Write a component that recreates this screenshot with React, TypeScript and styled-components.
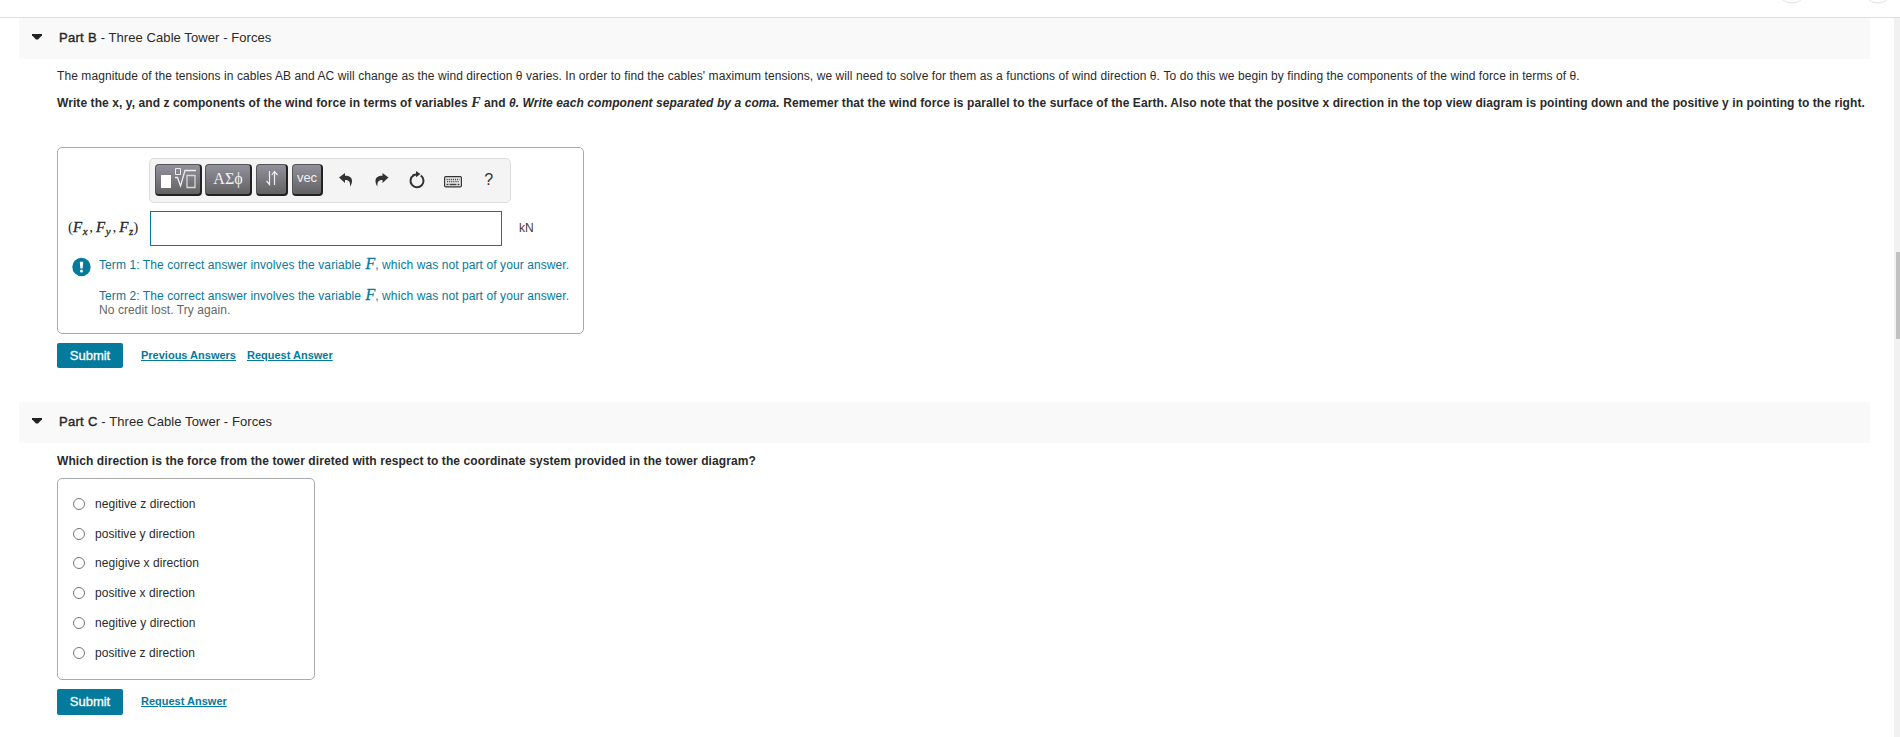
import { useState } from "react";
import styled, { createGlobalStyle } from "styled-components";

const choices = [
  "negitive z direction",
  "positive y direction",
  "negigive x direction",
  "positive x direction",
  "negitive y direction",
  "positive z direction",
];

const PartHeading = ({ part }: { part: string }) => (
  <PartHeader>
    <Caret viewBox="0 0 10 6">
      <path d="M0 0h10v1.2L6 5.6H4L0 1.2z" fill="#222" />
    </Caret>
    <PartTitle>
      <PartName>Part {part}</PartName> - Three Cable Tower - Forces
    </PartTitle>
  </PartHeader>
);

const Term = ({ n }: { n: number }) => (
  <TermLine>
    Term {n}: The correct answer involves the variable <MathVar>F</MathVar>,
    which was not part of your answer.
  </TermLine>
);

const Toolbar = () => (
  <ToolbarWrapper>
    <ToolButton $width={47} $gap={3}>
      <svg width="36" height="22" viewBox="0 0 36 22">
        <path d="M1 8h10v13H1z" fill="#fff" />
        <g fill="none" stroke="#eee">
          <path d="M15.5 1.5h5v6h-5z" />
          <path d="M15 10.5h2.5l3 8.5 4.5-15.5h11" strokeWidth="1.3" />
          <path d="M27 8.5h8v12h-8z" stroke="#d8d8d8" strokeWidth="1.3" />
        </g>
      </svg>
    </ToolButton>
    <ToolButton $width={47} $serif>
      ΑΣϕ
    </ToolButton>
    <ToolButton $width={32}>
      <svg width="14" height="16" viewBox="0 0 14 16">
        <path
          d="M4.5 1v13M1.5 11l3 3.5v-3.5M9.5 15V2M6.8 5l2.7-3.5L12.5 5"
          fill="none"
          stroke="#eee"
          strokeWidth="1.2"
        />
      </svg>
    </ToolButton>
    <ToolButton $width={31} $gap={5}>
      vec
    </ToolButton>
    <IconButton>
      <svg width="14" height="16" viewBox="0 0 14 16">
        <path
          d="M0 5.5 6 1v2.7c4.7 0 7 2 7 5 0 2.3-.7 4-2 6.1.5-4.3-.5-6.8-5-6.8v3z"
          fill="#333"
        />
      </svg>
    </IconButton>
    <IconButton>
      <svg width="14" height="16" viewBox="0 0 14 16">
        <path
          d="M13.5 5.5 7.5 1v2.7c-4.7 0-7 2-7 5 0 2.3.7 4 2 6.1-.5-4.3.5-6.8 5-6.8v3z"
          fill="#333"
        />
      </svg>
    </IconButton>
    <IconButton>
      <svg width="16" height="18" viewBox="0 0 16 18">
        <path
          d="M4.5 4.3A6.5 6.5 0 1 0 11.8 4.5"
          fill="none"
          stroke="#333"
          strokeWidth="2"
        />
        <path d="M3.5 3.3 7 2.5V0l4.5 3L7 6.3V4.5L4.5 5.5z" fill="#333" />
      </svg>
    </IconButton>
    <IconButton>
      <Keyboard width="18" height="12" viewBox="0 0 18 12">
        <rect
          x=".6"
          y=".6"
          width="16.8"
          height="10.3"
          rx="1.2"
          fill="#eee"
          stroke="#333"
          strokeWidth="1.2"
        />
        <g stroke="#444" strokeWidth="1.3">
          <path d="M2.5 3.5h13M3 5.7h12.5" strokeDasharray="1.2 .9" />
          <path d="M2.5 8.5h2M5.5 8.5h7M13.5 8.5h2" />
        </g>
      </Keyboard>
    </IconButton>
    <IconButton>?</IconButton>
  </ToolbarWrapper>
);

const App = () => {
  const [answer, setAnswer] = useState("");

  return (
    <Page>
      <GlobalStyle />
      <TopBar>
        <svg width="120" height="5" viewBox="0 0 120 5">
          <g fill="none" stroke="#e2e2e2">
            <circle cx="22" cy="-13" r="16" />
            <circle cx="108" cy="-13" r="16" />
          </g>
        </svg>
      </TopBar>
      <Body>
        <Content>
          <PartHeading part="B" />
          <Intro>
            The magnitude of the tensions in cables AB and AC will change as the
            wind direction θ varies. In order to find the cables' maximum
            tensions, we will need to solve for them as a functions of wind
            direction θ. To do this we begin by finding the components of the
            wind force in terms of θ.
          </Intro>
          <Question>
            Write the x, y, and z components of the wind force in terms of
            variables <BoldVar>F</BoldVar> and{" "}
            <em>θ. Write each component separated by a coma.</em> Rememer that
            the wind force is parallel to the surface of the Earth. Also note
            that the positve x direction in the top view diagram is pointing
            down and the positive y in pointing to the right.
          </Question>
          <AnswerBox>
            <Toolbar />
            <AnswerRow>
              <AnswerLabel htmlFor="answer">
                (<i>F</i>
                <sub>x</sub>
                <Comma>,</Comma>
                <i>F</i>
                <sub>y</sub>
                <Comma>,</Comma>
                <i>F</i>
                <sub>z</sub>)
              </AnswerLabel>
              <AnswerInput
                id="answer"
                value={answer}
                onChange={(ev) => setAnswer(ev.target.value)}
              />
              <Unit>kN</Unit>
            </AnswerRow>
            <Feedback>
              <svg width="19" height="20" viewBox="0 0 20 20">
                <circle cx="10" cy="10" r="9.7" fill="#047a9c" />
                <path d="M8.2 4.5h3.6l-.6 7H8.8z" fill="#fff" />
                <circle cx="10" cy="14.3" r="1.6" fill="#fff" />
              </svg>
              <div>
                <Term n={1} />
                <Term n={2} />
                <NoCredit>No credit lost. Try again.</NoCredit>
              </div>
            </Feedback>
          </AnswerBox>
          <Actions $height={25}>
            <SubmitBtn>Submit</SubmitBtn>
            <TextLink href="#">Previous Answers</TextLink>
            <TextLink href="#">Request Answer</TextLink>
          </Actions>

          <SecondPart>
            <PartHeading part="C" />
            <ChoiceQuestion>
              Which direction is the force from the tower direted with respect
              to the coordinate system provided in the tower diagram?
            </ChoiceQuestion>
            <ChoiceBox>
              {choices.map((choice) => (
                <Choice key={choice}>
                  <Radio type="radio" name="direction" />
                  {choice}
                </Choice>
              ))}
            </ChoiceBox>
            <Actions $height={26}>
              <SubmitBtn>Submit</SubmitBtn>
              <TextLink href="#">Request Answer</TextLink>
            </Actions>
          </SecondPart>
        </Content>
        <ScrollTrack>
          <ScrollThumb />
        </ScrollTrack>
      </Body>
    </Page>
  );
};

const GlobalStyle = createGlobalStyle`
  * {
    box-sizing: border-box;
  }

  body {
    margin: 0;
    background-color: #fff;
    color: #2a2a2a;
    font-family: "Liberation Sans", Arial, sans-serif;
    font-size: 12px;
  }
`;

const Page = styled.div`
  height: 737px;
  display: flex;
  flex-direction: column;
  overflow: hidden;
`;

const TopBar = styled.header`
  height: 18px;
  flex: none;
  display: flex;
  justify-content: flex-end;
  padding-right: 10px;
  border-bottom: 1px solid #ddd;
`;

const Body = styled.div`
  flex: 1;
  display: flex;
  justify-content: space-between;
`;

const Content = styled.main`
  width: 1851px;
  margin-left: 19px;
`;

const PartHeader = styled.div`
  height: 41px;
  display: flex;
  align-items: center;
  padding: 0 0 3px 13.4px;
  background-color: #f9f9f9;
`;

const Caret = styled.svg`
  width: 10px;
  height: 6px;
  margin-right: 16.6px;
`;

const PartTitle = styled.h2`
  margin: 0;
  font-size: 13px;
  font-weight: 400;
  letter-spacing: 0.08px;
`;

const PartName = styled.span`
  letter-spacing: 0.3px;
  -webkit-text-stroke: 0.4px #252525;
`;

const Intro = styled.p`
  margin: 8px 0 0 38px;
  line-height: 18px;
  letter-spacing: 0.078px;
  white-space: nowrap;
`;

const Question = styled.p`
  height: 18px;
  margin: 9px 0 0 38px;
  line-height: 18px;
  font-weight: 700;
  letter-spacing: 0.08px;
  white-space: nowrap;
`;

const BoldVar = styled.i`
  font-family: "Liberation Serif", serif;
  font-size: 14px;
  line-height: 0;
`;

const AnswerBox = styled.section`
  width: 527px;
  height: 187px;
  margin: 35px 0 0 38px;
  padding-top: 10px;
  border: 1px solid #aaa;
  border-radius: 5px;
`;

const ToolbarWrapper = styled.div`
  width: 362px;
  height: 45px;
  margin-left: 91px;
  padding: 0 0 1px 5px;
  display: flex;
  align-items: center;
  border: 1px solid #ddd;
  border-radius: 5px;
  background-color: #f4f4f4;
`;

const ToolButton = styled.button<{
  $width: number;
  $gap?: number;
  $serif?: boolean;
}>`
  width: ${(p) => p.$width}px;
  height: 32px;
  margin: 0 ${(p) => p.$gap ?? 4}px 0 0;
  padding: 0 0 ${(p) => (p.$serif ? 2 : 4)}px;
  display: flex;
  align-items: center;
  justify-content: center;
  border: 1px solid #555;
  border-right: 2px solid #222;
  border-bottom: 2px solid #222;
  border-radius: 4px;
  background: linear-gradient(#92919c, #626262);
  color: #f2f2f2;
  font-family: ${(p) =>
    p.$serif ? '"Liberation Serif", serif' : '"Liberation Sans", sans-serif'};
  font-size: ${(p) => (p.$serif ? 16 : 13)}px;
`;

const IconButton = styled.button`
  width: 35.7px;
  height: 32px;
  padding: 0;
  border: none;
  display: flex;
  align-items: center;
  justify-content: center;
  background: none;
  color: #333;
  font-family: inherit;
  font-size: 16px;
`;

const Keyboard = styled.svg`
  margin-top: 4px;
`;

const AnswerRow = styled.div`
  height: 35px;
  margin-top: 8px;
  padding-left: 10px;
  display: flex;
  align-items: center;
`;

const AnswerLabel = styled.label`
  width: 82px;
  padding-bottom: 4px;
  font-family: "Liberation Serif", serif;
  font-size: 15px;
  line-height: 20px;
  white-space: nowrap;

  i {
    -webkit-text-stroke: 0.3px #252525;
  }

  sub {
    position: relative;
    top: -1px;
    margin-left: 0.5px;
    font-size: 11px;
    font-style: italic;
    line-height: 0;
    -webkit-text-stroke: 0.3px #252525;
  }
`;

const Comma = styled.span`
  margin: 0 3px 0 1.8px;
`;

const AnswerInput = styled.input`
  width: 352px;
  height: 35px;
  padding: 0 8px;
  border: 1px solid #047a9c;
  outline: none;
`;

const Unit = styled.span`
  margin-left: 17px;
  padding-bottom: 2px;
  color: #4c3434;
  letter-spacing: 0.1px;
`;

const Feedback = styled.div`
  margin-top: 11px;
  padding-left: 14px;
  display: flex;
  gap: 8px;
  color: #047a9c;
`;

const TermLine = styled.p`
  height: 16px;
  margin: 0 0 15px;
  line-height: 16px;
  letter-spacing: 0.085px;
  white-space: nowrap;
`;

const MathVar = styled.i`
  font-family: "Liberation Serif", serif;
  font-size: 16px;
  line-height: 0;
  margin-left: 1px;
  -webkit-text-stroke: 0.3px #047a9c;
`;

const NoCredit = styled.p`
  margin: -16px 0 0;
  line-height: 15px;
  letter-spacing: 0.08px;
  color: #666;
`;

const Actions = styled.div<{ $height: number }>`
  height: ${(p) => p.$height}px;
  margin: 9px 0 0 38px;
  display: flex;
  align-items: center;
`;

const SubmitBtn = styled.button`
  width: 66px;
  height: 100%;
  margin-right: 18px;
  padding: 0 0 1px;
  border: none;
  border-radius: 2px;
  background-color: #047a9c;
  color: #fff;
  font-family: inherit;
  font-size: 13px;
  -webkit-text-stroke: 0.3px #fff;
`;

const TextLink = styled.a`
  margin-right: 11px;
  padding-bottom: 2px;
  color: #047a9c;
  font-size: 11px;
  font-weight: 700;
`;

const SecondPart = styled.section`
  margin-top: 34px;
`;

const ChoiceQuestion = styled.p`
  margin: 9px 0 0 38px;
  line-height: 18px;
  font-weight: 700;
  letter-spacing: 0.09px;
`;

const ChoiceBox = styled.div`
  width: 258px;
  height: 202px;
  margin: 8px 0 0 38px;
  padding: 10px 0 0 15px;
  border: 1px solid #aaa;
  border-radius: 5px;
`;

const Choice = styled.label`
  height: 29.8px;
  display: flex;
  align-items: center;
  letter-spacing: 0.06px;
`;

const Radio = styled.input`
  appearance: none;
  width: 12px;
  height: 12px;
  margin: 0 10px 0 0;
  border: 1px solid #767676;
  border-radius: 50%;
  background-color: #fff;
`;

const ScrollTrack = styled.div`
  width: 6px;
  padding: 234px 0 0 2px;
  background-color: #f1f1f1;
`;

const ScrollThumb = styled.div`
  height: 87px;
  background-color: #c1c1c1;
`;

export default App;
